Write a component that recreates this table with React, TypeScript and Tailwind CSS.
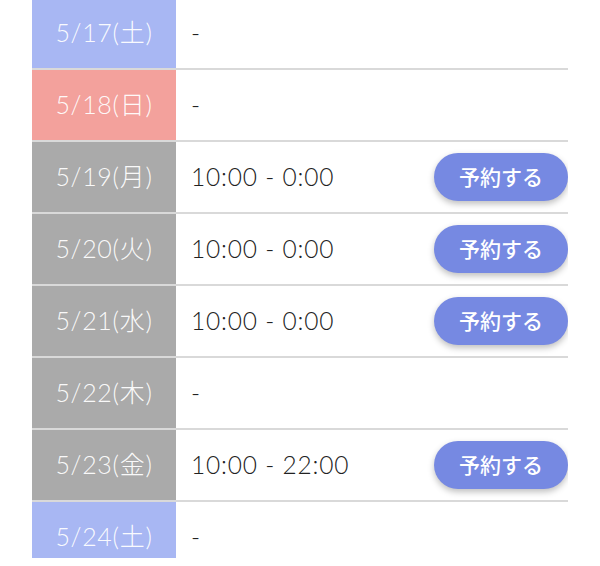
import React from "react";

type Day = {
  date: string;
  kind: "sat" | "sun" | "week";
  hours?: string;
};

const days: Day[] = [
  { date: "5/17(土)", kind: "sat" },
  { date: "5/18(日)", kind: "sun" },
  { date: "5/19(月)", kind: "week", hours: "10:00 - 0:00" },
  { date: "5/20(火)", kind: "week", hours: "10:00 - 0:00" },
  { date: "5/21(水)", kind: "week", hours: "10:00 - 0:00" },
  { date: "5/22(木)", kind: "week" },
  { date: "5/23(金)", kind: "week", hours: "10:00 - 22:00" },
  { date: "5/24(土)", kind: "sat" },
];

const dateBg = {
  sat: "bg-[#a8b7f3]",
  sun: "bg-[#f3a19c]",
  week: "bg-[#aaaaaa]",
};

const font = { fontFamily: 'Lato, "Noto Sans CJK JP", sans-serif' };

export default function App() {
  return (
    <div className="w-[600px] h-[566px] bg-white" style={font}>
      <div className="mx-8 h-[558px] overflow-hidden">
        <div className="-mt-[2px]">
          {days.map((d) => (
            <div key={d.date} className="flex h-[72px] border-b-2 border-[#d9d9d9]">
              <div
                className={`w-[144px] shrink-0 flex items-center justify-center text-[25px] font-light tracking-[0.7px] text-white/95 ${dateBg[d.kind]}`}
              >
                {d.date}
              </div>
              <div className="flex-1 flex items-center justify-between pl-[15px]">
                <span className="text-[24.5px] font-light tracking-[0.8px] text-[#222222]">
                  {d.hours ?? "-"}
                </span>
                {d.hours && (
                  <button
                    className="h-[48px] w-[134px] rounded-full bg-[#7689e2] text-white text-[21px] font-medium shadow-[0_3px_6px_rgba(0,0,0,0.25)]"
                    style={{ fontFamily: '"Noto Sans CJK JP", sans-serif' }}
                  >
                    予約する
                  </button>
                )}
              </div>
            </div>
          ))}
        </div>
      </div>
    </div>
  );
}
